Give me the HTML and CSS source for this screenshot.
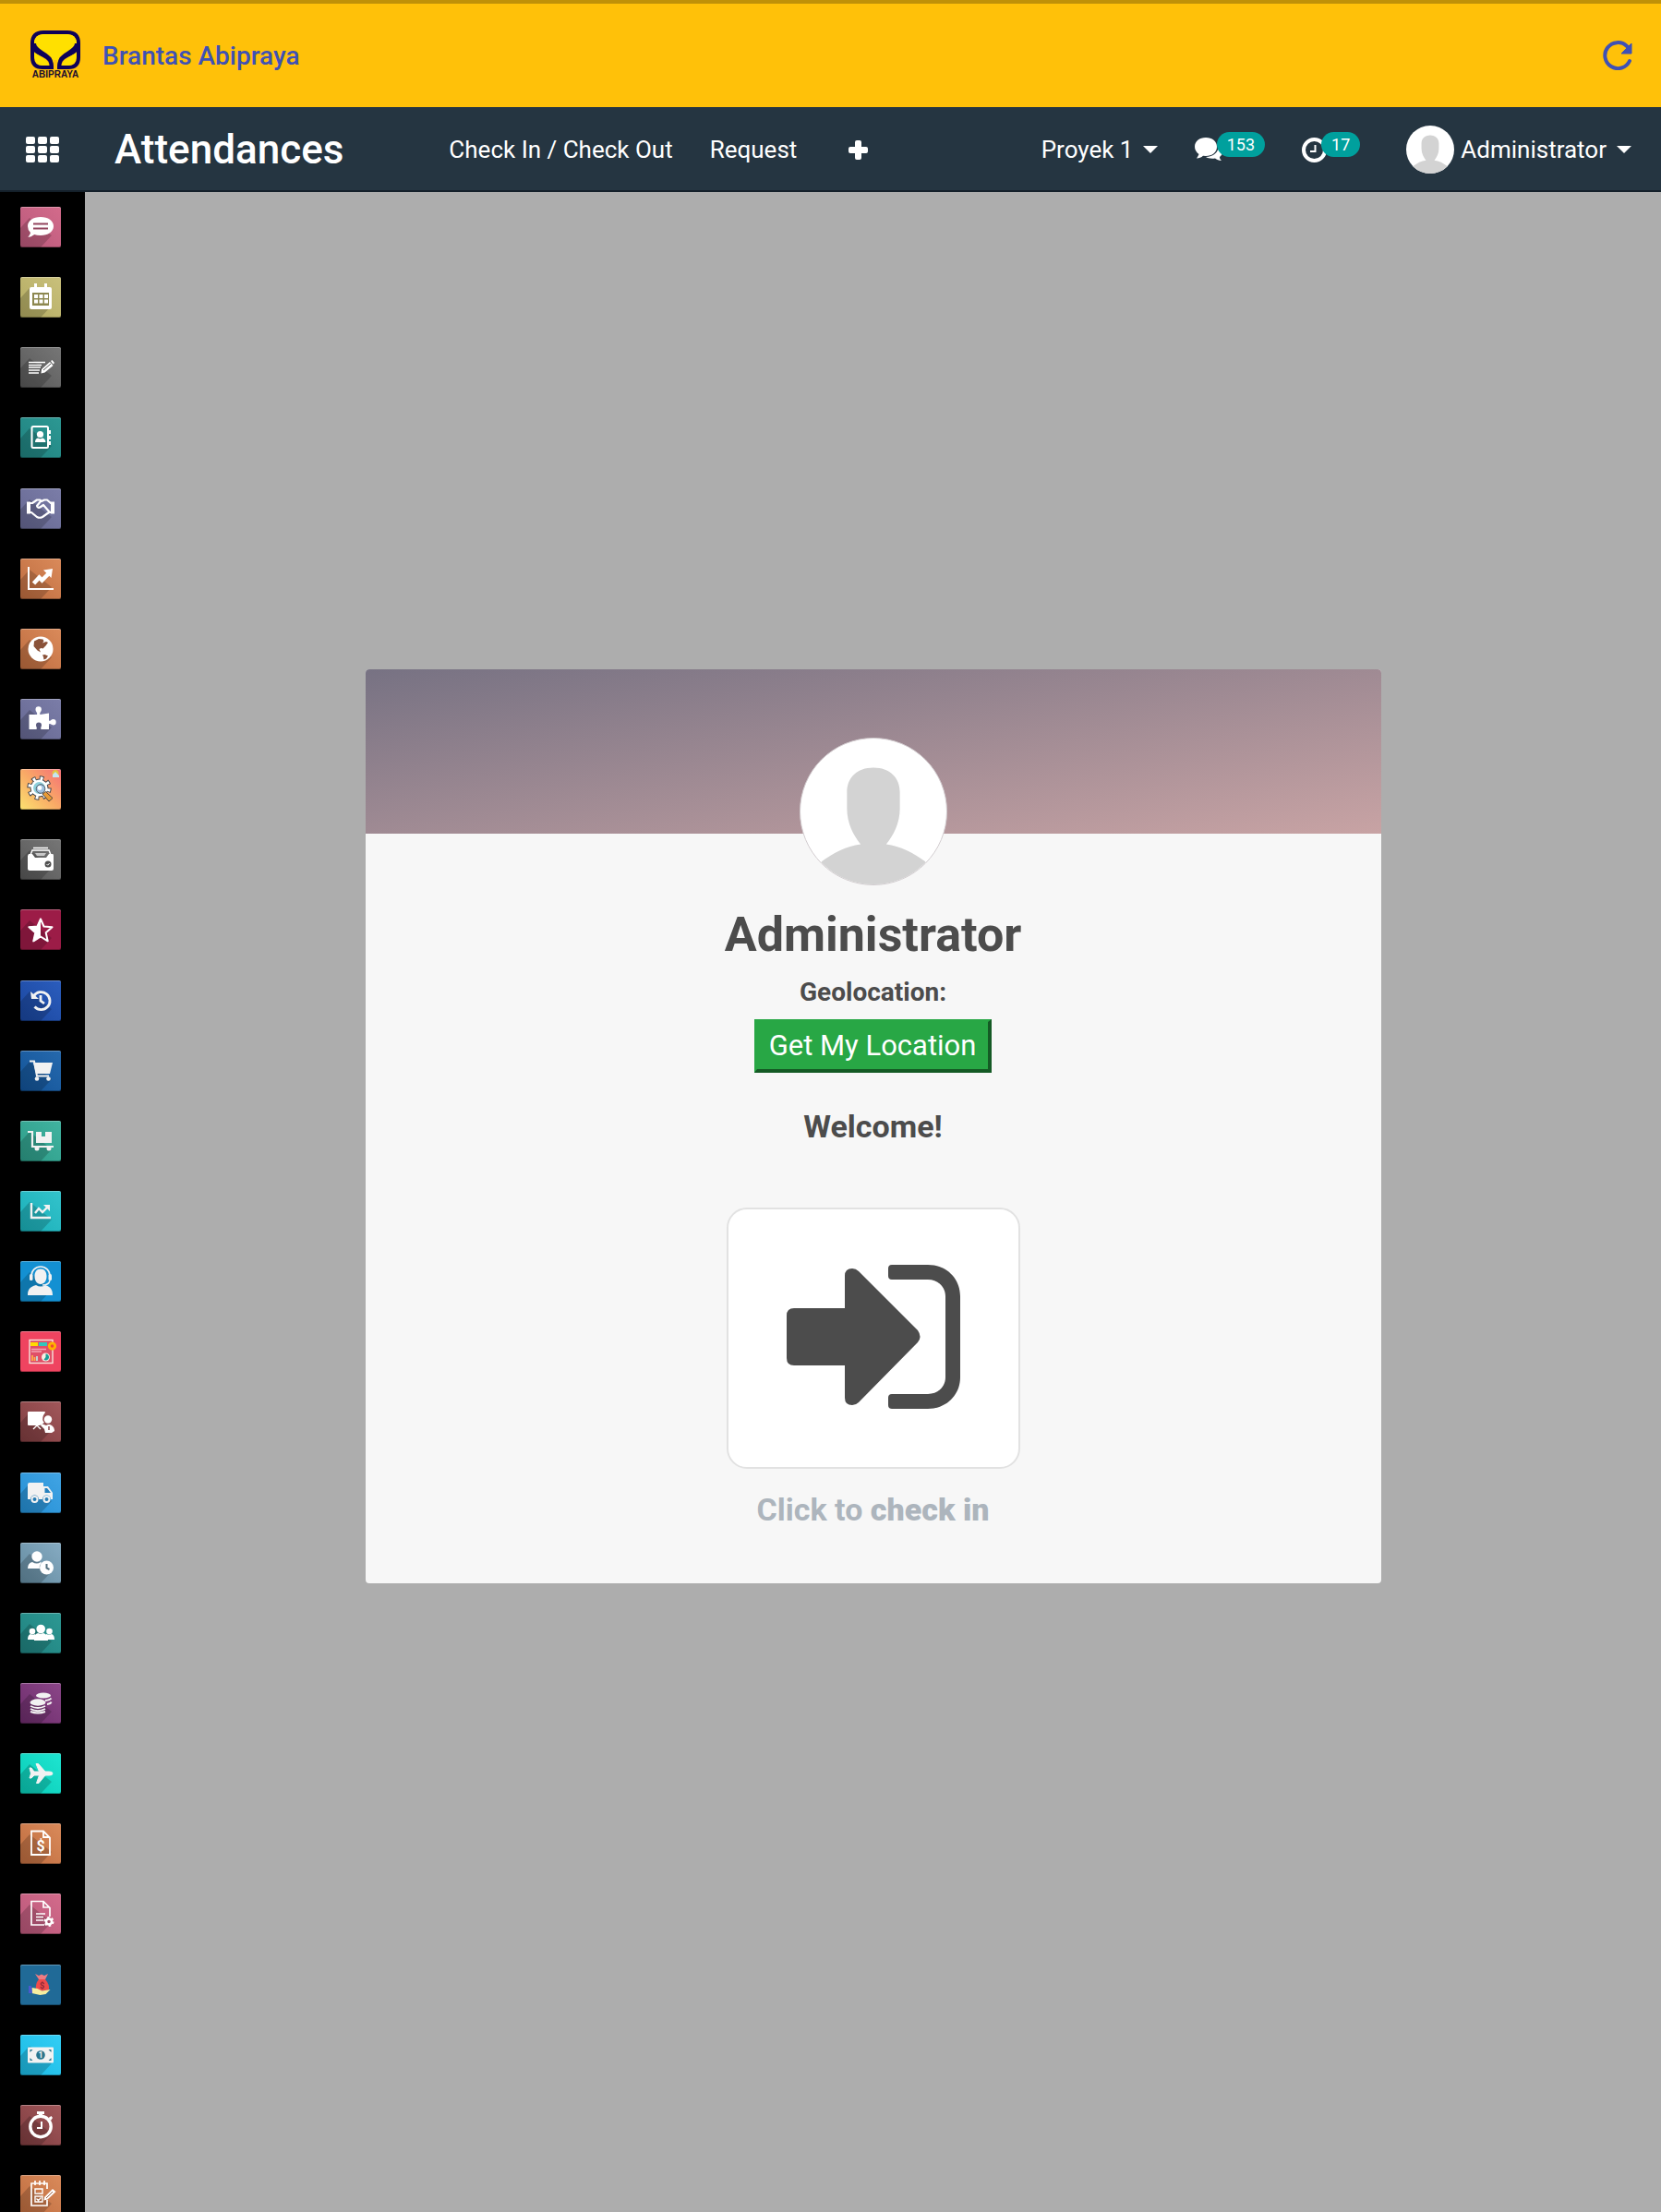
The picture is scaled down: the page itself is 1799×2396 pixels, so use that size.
FILE: index.html
```html
<!DOCTYPE html>
<html lang="en">
<head>
  <meta charset="UTF-8">
  <meta name="viewport" content="width=device-width, initial-scale=1.0">
  <title>Attendances</title>
  <link rel="stylesheet" href="styles.css">
</head>
<body>
  <!-- Shared symbols -->
  <svg class="symbols" width="0" height="0" aria-hidden="true">
    <symbol id="shade" viewBox="0 0 44 44"><path d="M10 12 0 23v21h22l12-13z" fill="#000" opacity=".18"/></symbol>
    <symbol id="caret" viewBox="0 0 16 8"><path d="M0 0h16L8 8z" fill="currentColor"/></symbol>
    <symbol id="person" viewBox="0 0 160 160">
      <path d="M80 32c-18 0-29 11-29 27v18c0 16 7 29 15 39-16 2-29 9-43 19v25h114v-25c-14-10-27-17-43-19 8-10 15-23 15-39V59c0-16-11-27-29-27z" fill="#d3d3d3"/>
    </symbol>
  </svg>

  <header class="brand-bar">
    <a class="brand" href="#">
      <svg class="brand-logo" viewBox="0 0 54 54" aria-hidden="true">
        <path d="M14 2h26q12 0 12 12v15q0 11-11 11H31c0-7 3-10 9-13 8-4 12-7 12-13M14 2Q2 2 2 14v15q0 11 11 11h10c0-7-3-10-9-13-8-4-12-7-12-13" fill="#ffc109" stroke="#0d0259" stroke-width="4"/>
        <path d="M15 4h24c7 0 11 4 11 10 0 8-16 9-19 16-2 4-2 9-2 12h-4c0-3 0-8-2-12C20 23 4 22 4 14 4 8 8 4 15 4z" fill="#ffe000"/>
        <path d="M4 14c0 8 12 10 17 17 2 3 2 6 2 11M50 14c0 8-12 10-17 17-2 3-2 6-2 11" fill="none" stroke="#0d0259" stroke-width="4"/>
        <path d="M4 24c7 4 15 8 16 14h-6C7 38 4 34 4 24zm46 0c-7 4-15 8-16 14h6c7 0 10-4 10-14z" fill="#ffe000"/>
        <path d="M25 32h4v10h-4z" fill="#ffc109"/>
        <text x="27" y="51" text-anchor="middle" class="logo-text">ABIPRAYA</text>
      </svg>
      <span>Brantas Abipraya</span>
    </a>
    <button class="reload" type="button" aria-label="Reload">
      <svg viewBox="0 0 32 32"><path d="M29 22A14 14 0 1 1 26 6" fill="none" stroke="#3f51b5" stroke-width="4" stroke-linecap="round"/><path d="M31 3v11H20z" fill="#3f51b5" stroke="#3f51b5" stroke-width="1" stroke-linejoin="round"/></svg>
    </button>
  </header>

  <nav class="navbar">
    <button class="apps-toggle" type="button" aria-label="Applications">
      <svg viewBox="0 0 36 28" fill="#fff">
        <rect width="10" height="8" rx="2"/><rect x="13" width="10" height="8" rx="2"/><rect x="26" width="10" height="8" rx="2"/>
        <rect y="10" width="10" height="8" rx="2"/><rect x="13" y="10" width="10" height="8" rx="2"/><rect x="26" y="10" width="10" height="8" rx="2"/>
        <rect y="20" width="10" height="8" rx="2"/><rect x="13" y="20" width="10" height="8" rx="2"/><rect x="26" y="20" width="10" height="8" rx="2"/>
      </svg>
    </button>
    <a class="app-name" href="#">Attendances</a>
    <div class="menu">
      <a href="#">Check In / Check Out</a>
      <a href="#">Request</a>
      <button class="add" type="button" aria-label="New">
        <svg viewBox="0 0 21 21"><path d="M9 0h3q2 0 2 2v5h5q2 0 2 2v3q0 2-2 2h-5v5q0 2-2 2H9q-2 0-2-2v-5H2q-2 0-2-2V9q0-2 2-2h5V2q0-2 2-2z" fill="#fff"/></svg>
      </button>
    </div>
    <div class="systray">
      <label class="company">
        <select aria-label="Company"><option>Proyek 1</option></select>
        <svg class="caret" aria-hidden="true"><use href="#caret"/></svg>
      </label>
      <button class="tray-button" type="button" aria-label="Messages">
        <svg class="tray-icon chats" viewBox="0 0 30 26" fill="#fff">
          <path d="M12 0c7 0 12 4 12 10s-5 10-12 10l-3-.3C7 21.500 5 22 2 22.500c1-1.500 2-3 2.500-4.500C2 16 0 13.500 0 10 0 4 5 0 12 0z"/>
          <path d="M26 8c3 2 4 4 4 7s-1 4-3 6c0 2 1 3 2 4-3 0-5-1-7-2.500-4 .5-8 0-10-1.500 8 0 14-5 14-13z"/>
        </svg>
        <span class="badge">153</span>
      </button>
      <button class="tray-button" type="button" aria-label="Activities">
        <svg class="tray-icon clock" viewBox="0 0 27 27"><circle cx="13.500" cy="13.500" r="11.500" fill="none" stroke="#fff" stroke-width="4"/><path d="M14.500 8v7H9" fill="none" stroke="#fff" stroke-width="2"/></svg>
        <span class="badge">17</span>
      </button>
      <button class="user-menu" type="button">
        <svg class="user-avatar" viewBox="0 0 160 160" aria-hidden="true"><use href="#person"/></svg>
        <span>Administrator</span>
        <svg class="caret" aria-hidden="true"><use href="#caret"/></svg>
      </button>
    </div>
  </nav>

  <div class="layout">
    <aside class="sidebar">
      <ul class="app-list">
        <li><a href="#" class="tile pink" aria-label="Discuss"><svg viewBox="0 0 44 44"><use href="#shade"/><path d="M22 11c8 0 14 4 14 10s-6 10-14 10q-4 0-7-1-3 3-7 3 3-3 3-5-3-3-3-7c0-6 6-10 14-10z" fill="#fff"/><path d="M14 18.500h16M14 23.500h16" stroke="#93455f" stroke-width="2"/></svg></a></li>
        <li><a href="#" class="tile olive" aria-label="Calendar"><svg viewBox="0 0 44 44"><use href="#shade"/><path d="M12 11h3V7h3v4h8V7h3v4h3q2 0 2 2v20q0 2-2 2H12q-2 0-2-2V13q0-2 2-2z" fill="#fff"/><path d="M13 17h18v14H13z" fill="#8d8850"/><path d="M15 19h4v4h-4zm5.500 0h4v4h-4zm5.500 0h4v4h-4zm-11 5.500h4v4h-4zm5.500 0h4v4h-4zm5.500 0h4v4h-4z" fill="#fff"/></svg></a></li>
        <li><a href="#" class="tile grey" aria-label="Notes"><svg viewBox="0 0 44 44"><use href="#shade"/><path d="M9 16.500h18M9 19.500h14M9 22h13M9 25h12M9 28h11" stroke="#fff" stroke-width="1.300"/><path d="m23 24 9-8 3.500 4-9 7.500-4 1zM33 15l1.500-1 2.500 3-1.500 1.500z" fill="#fff"/><path d="m25 25 8-7" stroke="#555" stroke-width="1"/></svg></a></li>
        <li><a href="#" class="tile teal" aria-label="Contacts"><svg viewBox="0 0 44 44"><use href="#shade"/><rect x="12.500" y="10" width="17.500" height="23" rx="1.500" fill="none" stroke="#fff" stroke-width="2"/><path d="M31 14h2v4h-2zm0 6h2v4h-2zm0 6h2v4h-2z" fill="#fff"/><circle cx="21.500" cy="18.500" r="3.600" fill="#fff"/><path d="M16 27q0-4 3-4.500 2.500 1.500 5 0 3 .5 3.500 4.500z" fill="#fff"/></svg></a></li>
        <li><a href="#" class="tile violet" aria-label="CRM"><svg viewBox="0 0 44 44"><use href="#shade"/><path d="M7 14.500h4v13H7zm26 0h4v13h-4z" fill="#fff"/><path d="M11 16h2l5-3.500h3l2 1.500 3-1.500h3l4 3.500h1M11 26h1l6 5q3 1.500 6 0l7-5h3M22 14l-4 5q1 3 4 1l3-2 7 8" fill="none" stroke="#fff" stroke-width="2.200" stroke-linejoin="round"/></svg></a></li>
        <li><a href="#" class="tile orange" aria-label="Sales"><svg viewBox="0 0 44 44"><use href="#shade"/><path d="M9 9v24h27" fill="none" stroke="#fff" stroke-width="2"/><path d="m14.500 27 6-6.500 3 3 7-7" fill="none" stroke="#fff" stroke-width="4.500"/><path d="m25 12.500 10-1.500-1.500 10z" fill="#fff"/></svg></a></li>
        <li><a href="#" class="tile orange" aria-label="Website"><svg viewBox="0 0 44 44"><use href="#shade"/><circle cx="22" cy="22" r="13.500" fill="#fff"/><path d="m15 13.500 5-2.500 4.500.5 1 2-1.500 2 4-1.500 2 1-2.500 3.500-3 3-2-.5-2 1 1.500 3.500-3.500-2-4-4.500zm9 15 2.500-.5 3.500 1.500-2 3-2.500 1-.5-3z" fill="#8a5239"/></svg></a></li>
        <li><a href="#" class="tile violet" aria-label="Apps"><svg viewBox="0 0 44 44"><use href="#shade"/><path d="M9.500 17h8.500c1-2-1.500-3-1.500-5.500a3.200 3.200 0 0 1 6.400 0c0 2.500-2.500 3.500-1.400 5.500L31 15.500v8c2 1 2.500-1.500 4.500-1.500a3.200 3.200 0 0 1 0 6.400c-2 0-2.500-2-4.500-1v5.500h-8.500c-1-2 .5-2.500.5-4.500a3 3 0 0 0-6 0c0 2 1.500 2.500.5 4.500h-8z" fill="#fff"/></svg></a></li>
        <li><a href="#" class="tile sunset" aria-label="Studio"><svg viewBox="0 0 44 44"><circle cx="20.500" cy="20.500" r="10" fill="none" stroke="#43474e" stroke-width="6.500" stroke-dasharray="4.200 3.650"/><circle cx="20.500" cy="20.500" r="10" fill="#43474e"/><circle cx="20.500" cy="20.500" r="9.700" fill="none" stroke="#fff" stroke-width="5" stroke-dasharray="2.600 5.020" stroke-dashoffset="-.8"/><circle cx="20.500" cy="20.500" r="9" fill="#fff"/><circle cx="20.500" cy="20.500" r="6.500" fill="#8fd0dc"/><circle cx="22" cy="21.500" r="4.800" fill="#9fc0e0" stroke="#57616b"/><circle cx="21" cy="20.500" r="2.400" fill="#fff"/><path d="m24 27 3.500-2.500 7.500 7-4 3.500z" fill="#e99b36" stroke="#4f4740"/><circle cx="38" cy="4.500" r="3.500" fill="#e4c443"/><path d="m35 6 3-3 4 4v2h-7z" fill="#c5e6ef"/></svg></a></li>
        <li><a href="#" class="tile grey" aria-label="Documents"><svg viewBox="0 0 44 44"><use href="#shade"/><path d="m11 17 2-5h18l2 5M14 9.500h16" fill="none" stroke="#fff" stroke-width="1.500"/><path d="M9 16h4l3 4h12l3-4h4q1 0 1 2v14q0 2-2 2H10q-2 0-2-2V18z" fill="#fff"/><path d="M16 15h12l-2 3h-8z" fill="#c8c8c8"/><circle cx="30" cy="27" r="3.500" fill="#505050"/><path d="m28.500 27 1.200 1.200 2-2.200" fill="none" stroke="#fff"/></svg></a></li>
        <li><a href="#" class="tile crimson" aria-label="Ratings"><svg viewBox="0 0 44 44"><use href="#shade"/><path d="m22 10.500 3.500 8 9 .8-6.800 6 2 9-7.700-4.800-7.700 4.800 2-9-6.800-6 9-.8z" fill="none" stroke="#fff" stroke-width="2" stroke-linejoin="round"/><path d="M22 9v21l-8.500 5.500 2.500-10-8-6.700 10-.8z" fill="#fff"/></svg></a></li>
        <li><a href="#" class="tile royal" aria-label="History"><svg viewBox="0 0 44 44"><use href="#shade"/><path d="M14.500 17a9.500 9.500 0 1 1 1 11.500M22 16v6l4 3" fill="none" stroke="#f2f2f2" stroke-width="2.800"/><path d="m11 12 1 8h8z" fill="#f2f2f2"/></svg></a></li>
        <li><a href="#" class="tile blue" aria-label="Purchase"><svg viewBox="0 0 44 44"><use href="#shade"/><path d="M10 11.500h5l3 16h13" fill="none" stroke="#f2f2f2" stroke-width="2"/><path d="M14 13h21l-3 12H17z" fill="#f2f2f2"/><circle cx="18" cy="30.500" r="2.300" fill="#f2f2f2"/><circle cx="30.500" cy="30.500" r="2.300" fill="#f2f2f2"/></svg></a></li>
        <li><a href="#" class="tile green" aria-label="Inventory"><svg viewBox="0 0 44 44"><use href="#shade"/><path d="M8 12h5v16h23" fill="none" stroke="#f2f2f2" stroke-width="2.200"/><path d="M17 12h6v5h4v-5h7v12H17z" fill="#f2f2f2"/><circle cx="18" cy="30" r="2.500" fill="#f2f2f2"/><circle cx="31" cy="30" r="2.500" fill="#f2f2f2"/></svg></a></li>
        <li><a href="#" class="tile cyan" aria-label="Dashboards"><svg viewBox="0 0 44 44"><use href="#shade"/><path d="M12 13v16h21M16 24l4-5 4 4 6-6" fill="none" stroke="#f2f2f2" stroke-width="2.400"/><path d="M25 15h7v7z" fill="#f2f2f2"/></svg></a></li>
        <li><a href="#" class="tile azure" aria-label="Helpdesk"><svg viewBox="0 0 44 44"><use href="#shade"/><path d="M12 18v-2a9.500 9.500 0 0 1 20 0v2" fill="none" stroke="#f2f2f2" stroke-width="1.600"/><rect x="10" y="14" width="3.500" height="7" rx="1.500" fill="#f2f2f2"/><rect x="30.500" y="14" width="3.500" height="7" rx="1.500" fill="#f2f2f2"/><path d="M22 8.500c4.500 0 6.500 3.500 6.500 8S26 25 22 25s-6.500-4-6.500-8.500 2-8 6.500-8zM8 37c0-6 2-9 9-11q5 3 10 0c6 2 8 5 8 11z" fill="#f2f2f2"/><path d="M32 21q-1 5-8 5" fill="none" stroke="#f2f2f2" stroke-width="1.400"/></svg></a></li>
        <li><a href="#" class="tile rose" aria-label="Reports"><svg viewBox="0 0 44 44"><rect x="10" y="9.500" width="25" height="25" fill="#e04f67" stroke="#f7e3dc" stroke-width="1.400"/><path d="M11 12h8v4h-8z" fill="#ffdc00"/><path d="M20 12h9v4h-9z" fill="#31c6bd"/><path d="M12 19.500h16M12 22h11" stroke="#f3a4b4" stroke-width="1.500"/><path d="M13 26v6M15.500 28v4" stroke="#ffb347" stroke-width="1.700"/><path d="M18 27v5" stroke="#bfe9e2" stroke-width="1.700"/><circle cx="27.500" cy="28" r="4.500" fill="#f5eee2"/><path d="M27.500 28v-3.500a3.500 3.500 0 1 1-2 6.300z" fill="#1b9c94"/><circle cx="34.500" cy="16" r="3.200" fill="#ef4a33" stroke="#ffb200" stroke-width="2.800"/></svg></a></li>
        <li><a href="#" class="tile maroon" aria-label="Training"><svg viewBox="0 0 44 44"><use href="#shade"/><path d="M9 11h17q1 0 1 1l-2 3q-2 5 1 8l-5 3H9q-1 0-1-1V12q0-1 1-1z" fill="#fff"/><path d="m18 26-4 4m4-4 4 4" stroke="#fff" stroke-width="1.300"/><circle cx="30" cy="19.500" r="4.200" fill="#fff"/><path d="m23 24 5 2q3-2 6 0 3 2 3 6l-3 2h-7l-1-4-4-4z" fill="#fff"/><path d="M31 27v4" stroke="#8c4548" stroke-width="1.500"/></svg></a></li>
        <li><a href="#" class="tile sky" aria-label="Fleet"><svg viewBox="0 0 44 44"><use href="#shade"/><path d="M10 11h15v4h5l5 7v7h-2a4.500 4.500 0 0 0-9 0h-4a4.500 4.500 0 0 0-9 0H8V13q0-2 2-2z" fill="#f2f2f2"/><path d="M26.500 17h2.500l4 5h-6.500z" fill="#2580bd"/><circle cx="15.500" cy="29" r="3" fill="none" stroke="#f2f2f2" stroke-width="2"/><circle cx="28.500" cy="29" r="3" fill="none" stroke="#f2f2f2" stroke-width="2"/></svg></a></li>
        <li><a href="#" class="tile steel" aria-label="Attendances"><svg viewBox="0 0 44 44"><use href="#shade"/><circle cx="18" cy="15" r="5.700" fill="#fff"/><path d="M8 28q0-6 5-7 5 3 9 0l1 1q-3 3-2 6z" fill="#fff"/><circle cx="28.500" cy="27" r="7.500" fill="#fff"/><path d="M28.500 23v4.500l3 1.500" fill="none" stroke="#54707f" stroke-width="2"/></svg></a></li>
        <li><a href="#" class="tile teal" aria-label="Employees"><svg viewBox="0 0 44 44"><use href="#shade"/><circle cx="13" cy="20" r="3.300" fill="#fff"/><circle cx="31.500" cy="20" r="3.300" fill="#fff"/><path d="M8 29q0-5 3-6 3 1 5 0v6zm20 0v-6q3 1 6 0 3 1 3 6z" fill="#fff"/><circle cx="22.200" cy="17.500" r="4.800" fill="#fff"/><path d="M15 30q-1-7 4-8 3 1.500 6 0 5 1 5 8z" fill="#fff"/></svg></a></li>
        <li><a href="#" class="tile purple" aria-label="Payroll"><svg viewBox="0 0 44 44"><use href="#shade"/><ellipse cx="25" cy="13.500" rx="8" ry="3" fill="#f2f2f2"/><path d="M27 19q5-.5 6.500-2.500M29 23q4-.5 4.500-2.500" fill="none" stroke="#f2f2f2" stroke-width="2"/><ellipse cx="19" cy="21" rx="8.500" ry="3.700" fill="#f2f2f2"/><path d="M11 25q8 4 16 0M11 28q8 4.500 16 0M11 31q8 3 16 0" fill="none" stroke="#f2f2f2" stroke-width="1.900"/></svg></a></li>
        <li><a href="#" class="tile aqua" aria-label="Time Off"><svg viewBox="0 0 44 44"><use href="#shade"/><path d="M10 16h2l3 4h5.500L17 11.500h2.500L27 20h4.500q3.500 0 3.500 2t-3.500 2H27l-7 8.500h-2.500L20.500 24H15l-3 3h-2l1.500-5z" fill="#f2f2f2" stroke="#f2f2f2" stroke-linejoin="round"/></svg></a></li>
        <li><a href="#" class="tile orange" aria-label="Expenses"><svg viewBox="0 0 44 44"><use href="#shade"/><path d="M12 8.500h13l7 7V34H12zm13 0V15h7" fill="none" stroke="#fff" stroke-width="1.800"/><text x="22" y="30" text-anchor="middle" class="tile-text">$</text></svg></a></li>
        <li><a href="#" class="tile pink" aria-label="Contracts"><svg viewBox="0 0 44 44"><use href="#shade"/><path d="M26 34H12V8.500h13l7 7V25M25 8.500V15h7M17 22h10M17 25.500h8M17 29h8" fill="none" stroke="#fff" stroke-width="1.700"/><circle cx="31" cy="30.500" r="3" fill="none" stroke="#fff" stroke-width="2.500"/><circle cx="31" cy="30.500" r="4.500" fill="none" stroke="#fff" stroke-width="2" stroke-dasharray="2.400 2.300"/></svg></a></li>
        <li><a href="#" class="tile navy" aria-label="Loans"><svg viewBox="0 0 44 44"><path d="m16 10 4 2 3-1.500 3 1.500 4-2-3 6h-7z" fill="#ee7b82"/><path d="M20 16h7q5 6 4 11-7 3-14 0-1-6 3-11z" fill="#ee4b4b"/><text x="23.500" y="26" text-anchor="middle" class="bag-text">$</text><path d="m12.500 25 6 1 5 2.500 9-1.500-5 5-6 1-9-2z" fill="#f5eda0"/><path d="M9 23h3l1 8H9z" fill="#4a5ad0"/></svg></a></li>
        <li><a href="#" class="tile bright" aria-label="Invoicing"><svg viewBox="0 0 44 44"><use href="#shade"/><rect x="8" y="13.500" width="28" height="17" rx="1" fill="#f2f2f2"/><path d="M10.500 16h3l-3 3zm23 0v3l-3-3zm-23 12v-3l3 3zm23 0h-3l3-3z" fill="#28758e"/><circle cx="22" cy="22" r="4.800" fill="#28758e"/><text x="22" y="25" text-anchor="middle" class="bill-text">1</text></svg></a></li>
        <li><a href="#" class="tile maroon" aria-label="Timesheets"><svg viewBox="0 0 44 44"><use href="#shade"/><circle cx="22" cy="23.500" r="11.200" fill="none" stroke="#fff" stroke-width="3.400"/><path d="M18 7h8v3h-2v3h-4v-3h-2zm12.500 7 3-2 1.500 2-2 3z" fill="#fff"/><path d="M23 18v7h-5" fill="none" stroke="#fff" stroke-width="2"/></svg></a></li>
        <li><a href="#" class="tile orange" aria-label="Survey"><svg viewBox="0 0 44 44"><use href="#shade"/><path d="M29 27v6H12V9h17v6M16 6v5m5-5v5m5-5v5" fill="none" stroke="#fff" stroke-width="1.700"/><path d="M16 15h8v5h-8zm0 8h8v6h-8zm1.500 2.500 2 2 3-3" fill="none" stroke="#fff" stroke-width="1.400"/><path d="m26 24 9-9 3.500 3-9 8.500-4 1z" fill="#fff"/><path d="m28 25 7-7" stroke="#975b3b"/></svg></a></li>
      </ul>
    </aside>

    <main class="content">
      <section class="kiosk-card">
        <div class="kiosk-banner"></div>
        <svg class="kiosk-avatar" viewBox="0 0 160 160" aria-hidden="true"><use href="#person"/></svg>
        <h1>Administrator</h1>
        <h4>Geolocation:</h4>
        <button class="location-button" type="button">Get My Location</button>
        <h3>Welcome!</h3>
        <button class="check-in" type="button" aria-label="Check in">
          <svg viewBox="0 0 188 156" fill="#4c4c4c">
            <path d="M8 47h55V12q0-8 8-8 4 0 7 3l64 64q5 7 0 13l-64 65q-3 3-7 3-8 0-8-8v-35H8q-8 0-8-8V55q0-8 8-8z"/>
            <path d="M114 0h39c20 0 35 15 35 34v88c0 19-15 34-35 34h-39q-4 0-4-4v-8q0-4 4-4h39c11 0 19-8 19-18V34c0-10-8-18-19-18h-39q-4 0-4-4V4q0-4 4-4z"/>
          </svg>
        </button>
        <p class="hint">Click to <b>check in</b></p>
      </section>
    </main>
  </div>
</body>
</html>
```
FILE: styles.css
```css
/* Page */
* {
  box-sizing: border-box;
}

body {
  margin: 0;
  height: 100vh;
  display: flex;
  flex-direction: column;
  font-family: Roboto, sans-serif;
  font-size: 26px;
  color: #4c4c4c;
  background: #adadad;
}

h1, h3, h4, p, ul {
  margin: 0;
  padding: 0;
}

a {
  color: inherit;
  text-decoration: none;
}

button {
  font: inherit;
  color: inherit;
  background: none;
  border: none;
  padding: 0;
  cursor: pointer;
}

svg {
  display: block;
}

.symbols {
  position: absolute;
}

/* Brand bar */
.brand-bar {
  flex: none;
  display: flex;
  align-items: center;
  justify-content: space-between;
  height: 116px;
  padding: 0 31px 0 33px;
  border-top: 4px solid #bf9108;
  background: #ffc109;
  color: #3f51b5;
}

.brand {
  display: flex;
  align-items: center;
  gap: 24px;
  font-size: 28px;
  font-weight: 500;
}

.brand-logo {
  width: 54px;
  height: 54px;
}

.logo-text {
  font: bold 10px "Liberation Sans", Arial, sans-serif;
  fill: #1a0b30;
}

.reload svg {
  width: 32px;
  height: 32px;
}

/* Navbar */
.navbar {
  flex: none;
  display: flex;
  align-items: center;
  height: 92px;
  padding: 2px 32px 0 28px;
  border-bottom: 2px solid #14202a;
  background: #253541;
  color: #ffffff;
}

.apps-toggle svg {
  width: 36px;
  height: 28px;
}

.app-name {
  margin-left: 60px;
  font-size: 44px;
  font-weight: 500;
}

.menu {
  display: flex;
  align-items: center;
  gap: 40px;
  margin-left: 114px;
}

.add {
  margin-left: 16px;
}

.add svg {
  width: 21px;
  height: 21px;
}

.systray {
  display: flex;
  align-items: center;
  margin-left: auto;
}

.company {
  display: flex;
  align-items: center;
  gap: 10px;
}

.company select {
  appearance: none;
  border: none;
  padding: 0;
  background: none;
  color: inherit;
  font: inherit;
}

.caret {
  width: 16px;
  height: 8px;
}

.tray-button {
  display: flex;
  align-items: center;
  margin-left: 40px;
}

.chats {
  width: 30px;
  height: 26px;
}

.clock {
  width: 27px;
  height: 27px;
}

.badge {
  margin: 0 0 12px -6px;
  padding: 0 11px;
  border-radius: 14px;
  background: #00a09d;
  font-size: 18px;
  line-height: 27px;
}

.user-menu {
  display: flex;
  align-items: center;
  gap: 7px;
  margin-left: 50px;
}

.user-menu .caret {
  margin-left: 4px;
}

.user-avatar {
  width: 52px;
  height: 52px;
  border-radius: 50%;
  background: #ffffff;
}

/* Sidebar */
.layout {
  flex: 1;
  display: flex;
  min-height: 0;
}

.sidebar {
  flex: none;
  display: flex;
  width: 92px;
  padding: 16px 22px 0;
  background: #000000;
  overflow: hidden;
}

.app-list {
  display: flex;
  flex-direction: column;
  justify-content: space-between;
  gap: 32px;
  margin-bottom: -4px;
  list-style: none;
}

.tile {
  display: block;
  width: 44px;
  height: 44px;
  border-radius: 2px;
  box-shadow: inset 0 1px rgba(255, 255, 255, 0.3), inset 0 -1px rgba(0, 0, 0, 0.3);
}

.pink { background: linear-gradient(to bottom left, #d36b8b, #b9587a); }
.olive { background: linear-gradient(to bottom left, #c9c07b, #b3ab62); }
.grey { background: linear-gradient(to bottom left, #767676, #585858); }
.teal { background: linear-gradient(to bottom left, #2c9893, #20817f); }
.violet { background: linear-gradient(to bottom left, #7b7da8, #666892); }
.orange { background: linear-gradient(to bottom left, #da8a5a, #bd6c3f); }
.sunset { background: linear-gradient(to bottom left, #f46f78, #f9a966, #fbe270); }
.crimson { background: #9c1c47; }
.royal { background: linear-gradient(to bottom left, #2b5dbd, #1a469e); }
.blue { background: linear-gradient(to bottom left, #2669ad, #125398); }
.green { background: linear-gradient(to bottom left, #41b3a0, #2d9c88); }
.cyan { background: linear-gradient(to bottom left, #33c3cc, #1aaeb7); }
.azure { background: #1390d2; }
.rose { background: #ef4460; }
.maroon { background: linear-gradient(to bottom left, #a1575a, #7f3d40); }
.sky { background: linear-gradient(to bottom left, #41a4e4, #248fd4); }
.steel { background: linear-gradient(to bottom left, #86abc2, #638a9f); }
.purple { background: linear-gradient(to bottom left, #8b4688, #6c2c6b); }
.aqua { background: linear-gradient(to bottom left, #1ee5d1, #0acbb6); }
.navy { background: #206a97; }
.bright { background: linear-gradient(to bottom left, #32cef5, #1cb9e3); }

.tile-text {
  font: bold 16px Roboto, sans-serif;
  fill: #ffffff;
}

.bag-text {
  font: bold 9px Roboto, sans-serif;
  fill: #8c2836;
}

.bill-text {
  font: bold 9px Roboto, sans-serif;
  fill: #f2f2f2;
}

/* Check in card */
.content {
  flex: 1;
  display: flex;
  align-items: center;
  justify-content: center;
  padding-bottom: 164px;
}

.kiosk-card {
  display: flex;
  flex-direction: column;
  align-items: center;
  width: 100%;
  max-width: 1100px;
  padding-bottom: 60px;
  border-radius: 4px;
  background: #f7f7f7;
  overflow: hidden;
}

.kiosk-banner {
  align-self: stretch;
  height: 178px;
  background: linear-gradient(to bottom right, #777283, #c8a3a4);
}

.kiosk-avatar {
  width: 160px;
  height: 160px;
  margin-top: -104px;
  border: 1px solid #d3cdd0;
  border-radius: 50%;
  background: #ffffff;
}

h1 {
  margin-top: 23px;
  font-size: 52px;
  line-height: 62px;
}

h4 {
  margin-top: 14px;
  font-size: 28px;
  line-height: 34px;
}

.location-button {
  margin-top: 12px;
  padding: 1px 13px 0;
  border: 3px solid #28a745;
  border-right: 4px solid #155a25;
  border-bottom: 4px solid #155a25;
  background: #28a745;
  color: #ffffff;
  font-size: 31px;
  line-height: 50px;
}

h3 {
  margin-top: 38px;
  font-size: 34px;
  line-height: 40px;
}

.check-in {
  margin-top: 68px;
  padding: 60px 63px 63px;
  border: 2px solid #e2e2e2;
  border-radius: 22px;
  background: #ffffff;
}

.check-in svg {
  width: 188px;
  height: 156px;
}

.hint {
  margin-top: 24px;
  color: #adb5bd;
  font-size: 34px;
  font-weight: 700;
  line-height: 40px;
}

.hint b {
  font-weight: 900;
}
```
